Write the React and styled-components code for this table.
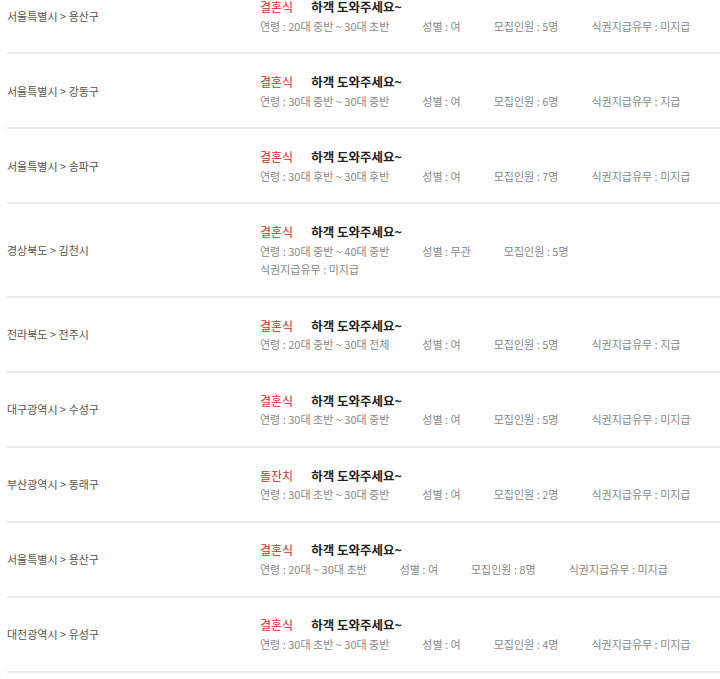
import React from "react";
import styled, { createGlobalStyle } from "styled-components";

const posts = [
  { area: "서울특별시 > 용산구", kind: "결혼식", age: "20대 중반 ~ 30대 초반", sex: "여", count: 5, meal: "미지급" },
  { area: "서울특별시 > 강동구", kind: "결혼식", age: "30대 중반 ~ 30대 중반", sex: "여", count: 6, meal: "지급" },
  { area: "서울특별시 > 송파구", kind: "결혼식", age: "30대 후반 ~ 30대 후반", sex: "여", count: 7, meal: "미지급" },
  { area: "경상북도 > 김천시", kind: "결혼식", age: "30대 중반 ~ 40대 중반", sex: "무관", count: 5, meal: "미지급" },
  { area: "전라북도 > 전주시", kind: "결혼식", age: "20대 중반 ~ 30대 전체", sex: "여", count: 5, meal: "지급" },
  { area: "대구광역시 > 수성구", kind: "결혼식", age: "30대 초반 ~ 30대 중반", sex: "여", count: 5, meal: "미지급" },
  { area: "부산광역시 > 동래구", kind: "돌잔치", age: "30대 초반 ~ 30대 중반", sex: "여", count: 2, meal: "미지급" },
  { area: "서울특별시 > 용산구", kind: "결혼식", age: "20대 ~ 30대 초반", sex: "여", count: 8, meal: "미지급" },
  { area: "대전광역시 > 유성구", kind: "결혼식", age: "30대 초반 ~ 30대 중반", sex: "여", count: 4, meal: "미지급" },
];

function App() {
  return (
    <>
      <GlobalStyle />
      <List>
        {posts.map((p, i) => (
          <Row key={i}>
            <Area>{p.area}</Area>
            <Info>
              <TitleLine>
                <Kind>{p.kind}</Kind>
                <Title>하객 도와주세요~</Title>
              </TitleLine>
              <Meta>
                <MetaItem>연령 : {p.age}</MetaItem>
                <MetaItem>성별 : {p.sex}</MetaItem>
                <MetaItem>모집인원 : {p.count}명</MetaItem>
                <MetaItem>식권지급유무 : {p.meal}</MetaItem>
              </Meta>
            </Info>
          </Row>
        ))}
      </List>
    </>
  );
}

const GlobalStyle = createGlobalStyle`
  body {
    margin: 0;
    background: #ffffff;
    font-family: "Noto Sans CJK KR", "Noto Sans", sans-serif;
    overflow: hidden;
  }
`;

const List = styled.ul`
  list-style: none;
  margin: -20.6px 0 0 7px;
  padding: 0;
`;

const Row = styled.li`
  display: flex;
  align-items: center;
  padding: 17.2px 0;
  border-bottom: 2px solid #ebebeb;
`;

const Area = styled.div`
  width: 253px;
  flex-shrink: 0;
  font-size: 11px;
  color: #555555;
`;

const Info = styled.div`
  width: 436px;
`;

const TitleLine = styled.div`
  display: flex;
  align-items: center;
  height: 20px;
`;

const Kind = styled.span`
  font-size: 12px;
  color: #d7282f;
  margin-right: 18px;
`;

const Title = styled.span`
  font-size: 12.5px;
  font-weight: 700;
  color: #222222;
`;

const Meta = styled.div`
  display: flex;
  flex-wrap: wrap;
  column-gap: 33px;
`;

const MetaItem = styled.span`
  font-size: 11px;
  line-height: 18.6px;
  color: #888888;
  white-space: nowrap;
`;

export default App;
